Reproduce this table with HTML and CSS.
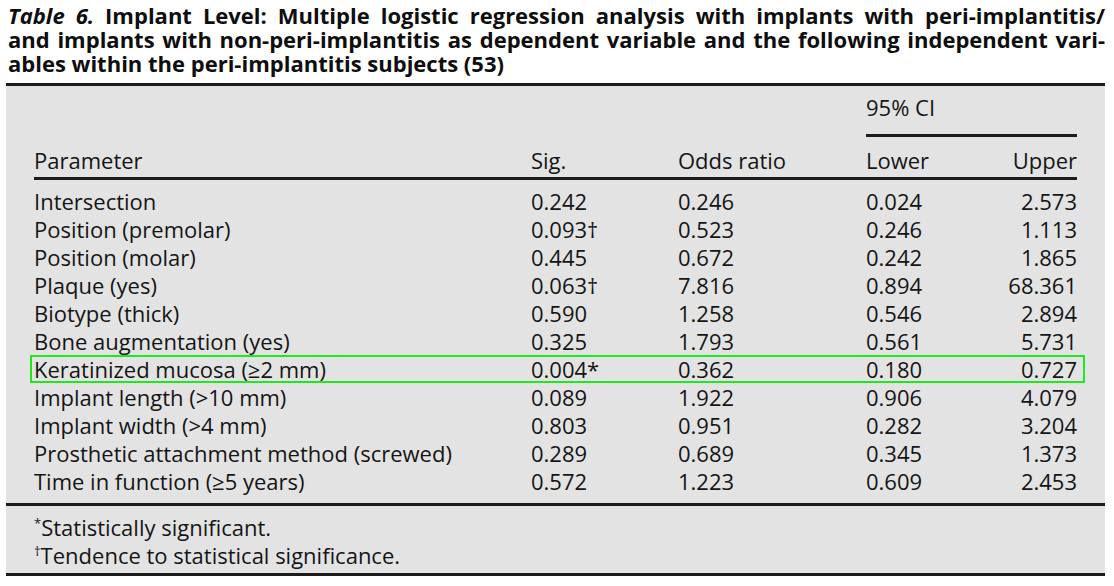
FILE: index.html
```html
<!DOCTYPE html>
<html lang="en">
<head>
<meta charset="utf-8">
<title>Table 6</title>
<link rel="stylesheet" href="styles.css">
</head>
<body>
<div class="caption">
  <div class="cap-line just"><em>Table 6.</em> Implant Level: Multiple logistic regression analysis with implants with peri-implantitis/</div>
  <div class="cap-line just">and implants with non-peri-implantitis as dependent variable and the following independent vari-</div>
  <div class="cap-line">ables within the peri-implantitis subjects (53)</div>
</div>
<div class="tbl-box">
  <div class="tbl-area">
    <div class="head">
      <div class="ci">95% CI</div>
      <div class="hcell">Parameter</div>
      <div class="hcell">Sig.</div>
      <div class="hcell">Odds ratio</div>
      <div class="hcell">Lower</div>
      <div class="hcell right">Upper</div>
    </div>
    <div class="body">
      <div class="row"><span>Intersection</span><span>0.242</span><span>0.246</span><span>0.024</span><span class="right">2.573</span></div>
      <div class="row"><span>Position (premolar)</span><span>0.093†</span><span>0.523</span><span>0.246</span><span class="right">1.113</span></div>
      <div class="row"><span>Position (molar)</span><span>0.445</span><span>0.672</span><span>0.242</span><span class="right">1.865</span></div>
      <div class="row"><span>Plaque (yes)</span><span>0.063†</span><span>7.816</span><span>0.894</span><span class="right">68.361</span></div>
      <div class="row"><span>Biotype (thick)</span><span>0.590</span><span>1.258</span><span>0.546</span><span class="right">2.894</span></div>
      <div class="row"><span>Bone augmentation (yes)</span><span>0.325</span><span>1.793</span><span>0.561</span><span class="right">5.731</span></div>
      <div class="row highlight"><span>Keratinized mucosa (≥2 mm)</span><span>0.004*</span><span>0.362</span><span>0.180</span><span class="right">0.727</span></div>
      <div class="row"><span>Implant length (&gt;10 mm)</span><span>0.089</span><span>1.922</span><span>0.906</span><span class="right">4.079</span></div>
      <div class="row"><span>Implant width (&gt;4 mm)</span><span>0.803</span><span>0.951</span><span>0.282</span><span class="right">3.204</span></div>
      <div class="row"><span>Prosthetic attachment method (screwed)</span><span>0.289</span><span>0.689</span><span>0.345</span><span class="right">1.373</span></div>
      <div class="row"><span>Time in function (≥5 years)</span><span>0.572</span><span>1.223</span><span>0.609</span><span class="right">2.453</span></div>
    </div>
  </div>
  <div class="notes">
    <div class="note"><sup>*</sup>Statistically significant.</div>
    <div class="note"><sup>†</sup>Tendence to statistical significance.</div>
  </div>
</div>
</body>
</html>
```
FILE: styles.css
```css
html, body {
  margin: 0;
  padding: 0;
  background: #ffffff;
}
body {
  font-family: "Open Sans", "Noto Sans", "Liberation Sans", sans-serif;
  color: #151515;
  width: 1114px;
}
.caption {
  padding: 3px 9px 0 8px;
  font-weight: 700;
  font-size: 22px;
  line-height: 24px;
  color: #0e0e0e;
}
.cap-line {
  white-space: nowrap;
}
.cap-line.just {
  text-align: justify;
  text-align-last: justify;
  white-space: normal;
}
.caption em {
  font-style: italic;
}
.tbl-box {
  margin: 8px 9px 0 6px;
  background: #e3e3e3;
  border-top: 3px solid #1c1c1c;
  border-bottom: 3px solid #1c1c1c;
  font-size: 22px;
  line-height: 28px;
}
.tbl-area {
  padding: 7px 28px 8px;
  border-bottom: 3px solid #1c1c1c;
}
.head,
.row {
  display: grid;
  grid-template-columns: 497px 147px 188px 1fr 1fr;
}
.head {
  border-bottom: 3px solid #1c1c1c;
  padding-bottom: 3px;
}
.ci {
  grid-column: 4 / 6;
  padding-bottom: 13px;
  border-bottom: 3px solid #1c1c1c;
  margin-bottom: 9px;
}
.right {
  text-align: right;
}
.body {
  padding-top: 7px;
}
.row {
  height: 28px;
}
.row.highlight {
  margin: 0 -8px 0 -4px;
  padding: 0 8px 0 4px;
  outline: 2px solid #1ee81e;
  outline-offset: -2px;
}
.notes {
  padding: 7px 28px 4px;
}
.note {
  height: 28px;
}
.note sup {
  font-size: 13px;
  line-height: 0;
  vertical-align: 8px;
}
```
